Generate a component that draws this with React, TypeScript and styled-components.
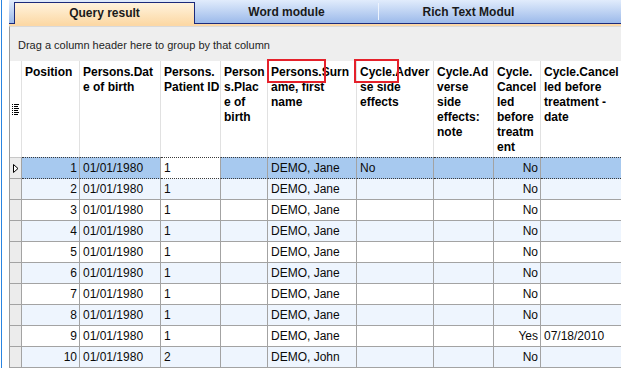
import React from 'react';
import styled, { createGlobalStyle } from 'styled-components';

const GlobalStyle = createGlobalStyle`
  html, body {
    margin: 0;
    padding: 0;
    background: #ffffff;
  }
  body {
    font-family: "Liberation Sans", Arial, sans-serif;
    font-size: 12px;
    color: #000;
  }
`;

const COLS = [12, 58, 81, 60, 47, 89, 77, 60, 47, 120];
const TEMPLATE = COLS.map((w) => `${w}px`).join(' ');

const Window = styled.div`
  display: flex;
  width: 621px;
  height: 368px;
  overflow: hidden;
`;

const Gutter = styled.div`
  width: 9px;
  flex-shrink: 0;
  display: flex;
  background: #ffffff;
`;

const GutterLine = styled.div`
  width: 1px;
  margin-left: 1px;
  background: #2a84e0;
`;

const Main = styled.div`
  flex: 1;
  display: flex;
  flex-direction: column;
  min-width: 0;
`;

const TabStrip = styled.div`
  height: 23px;
  display: flex;
  align-items: flex-end;
  border-bottom: 1px solid #1b2a7a;
  background: linear-gradient(#e1ecfc, #9cbaea);
`;

const Tab = styled.div<{ $active?: boolean; $width: number; $sep?: boolean }>`
  position: relative;
  width: ${(p) => p.$width}px;
  height: 23px;
  box-sizing: border-box;
  display: flex;
  align-items: center;
  justify-content: center;
  flex-shrink: 0;
  font-weight: bold;
  font-size: 12px;
  color: #1a1a1a;
  margin-left: ${(p) => (p.$active ? '5px' : '0')};
  ${(p) =>
    p.$active &&
    `
    border: 1px solid #1b2a7a;
    border-bottom: none;
    margin-bottom: -1px;
    height: 22px;
    padding-bottom: 1px;
    background: linear-gradient(#fff3dd, #fcd9a6);
  `}
  ${(p) =>
    p.$sep &&
    `
    &::before {
      content: '';
      position: absolute;
      left: 0;
      top: 3px;
      bottom: 3px;
      width: 1px;
      background: #eef4fe;
    }
  `}
`;

const PeachBand = styled.div`
  height: 2px;
  background: #fcd8a6;
`;

const Panel = styled.div`
  flex: 1;
  display: flex;
  flex-direction: column;
  background: #eeeeee;
  border-left: 1px solid #9c9c9c;
  border-top: 1px solid #d9d9d9;
  min-height: 0;
`;

const GroupArea = styled.div`
  height: 35px;
  display: flex;
  align-items: center;
  padding-left: 8px;
  padding-top: 1px;
  box-sizing: border-box;
  font-size: 11px;
  color: #1e1e1e;
`;

const Grid = styled.div`
  position: relative;
  flex: 1;
  background: #ffffff;
`;

const HeaderRow = styled.div`
  display: grid;
  grid-template-columns: ${TEMPLATE};
  height: 96px;
  background: #ffffff;
`;

const HeaderCell = styled.div`
  border-right: 1px solid #e1e1e1;
  padding: 4px 0 0 3px;
  font-weight: bold;
  font-size: 12px;
  line-height: 15px;
  white-space: nowrap;
  overflow: hidden;
  position: relative;
`;

const ChooserIcon = styled.svg`
  position: absolute;
  left: 2px;
  top: 43px;
`;

const Row = styled.div`
  display: grid;
  grid-template-columns: ${TEMPLATE};
`;

const Cell = styled.div<{
  $align?: 'left' | 'right';
  $bg: string;
  $selected?: boolean;
}>`
  height: 20px;
  line-height: 20px;
  padding: 0 2px 0 3px;
  text-align: ${(p) => p.$align ?? 'left'};
  background: ${(p) => p.$bg};
  border-right: 1px solid #a3a3a3;
  border-bottom: ${(p) => (p.$selected ? '1px dotted #3a3a3a' : '1px solid #a3a3a3')};
  border-top: ${(p) => (p.$selected ? '1px dotted #3a3a3a' : 'none')};
  white-space: nowrap;
  overflow: hidden;
  font-size: 12px;
  color: #0a0a0a;
`;

const Indicator = styled.div<{ $first?: boolean }>`
  height: 20px;
  background: #ececec;
  border-right: 1px solid #a3a3a3;
  border-bottom: 1px solid #a3a3a3;
  border-top: ${(p) => (p.$first ? '1px solid #c8c8c8' : 'none')};
  display: flex;
  align-items: center;
  padding-left: 3px;
`;

const Annotation = styled.div<{ $left: number; $width: number }>`
  position: absolute;
  top: -2px;
  left: ${(p) => p.$left}px;
  width: ${(p) => p.$width}px;
  height: 24px;
  box-sizing: border-box;
  border: 2px solid #e5212b;
  pointer-events: none;
`;

const HEADERS: string[][] = [
  [],
  ['Position'],
  ['Persons.Dat', 'e of birth'],
  ['Persons.', 'Patient ID'],
  ['Person', 's.Plac', 'e of', 'birth'],
  ['Persons.Surn', 'ame, first', 'name'],
  ['Cycle.Adver', 'se side', 'effects'],
  ['Cycle.Ad', 'verse', 'side', 'effects:', 'note'],
  ['Cycle.', 'Cancel', 'led', 'before', 'treatm', 'ent'],
  ['Cycle.Cancel', 'led before', 'treatment -', 'date'],
];

type DataRow = {
  pos: number;
  dob: string;
  pid: string;
  place: string;
  name: string;
  adverse: string;
  note: string;
  canceled: string;
  date: string;
};

const ROWS: DataRow[] = Array.from({ length: 10 }, (_, i) => ({
  pos: i + 1,
  dob: '01/01/1980',
  pid: i === 9 ? '2' : '1',
  place: '',
  name: i === 9 ? 'DEMO, John' : 'DEMO, Jane',
  adverse: i === 0 ? 'No' : '',
  note: '',
  canceled: i === 8 ? 'Yes' : 'No',
  date: i === 8 ? '07/18/2010' : '',
}));

const SELECTED = '#a7c9ef';
const ALT = '#eef5fe';

const App: React.FC = function () {
  return (
    <>
      <GlobalStyle />
      <Window>
        <Gutter>
          <GutterLine />
        </Gutter>
        <Main>
          <TabStrip>
            <Tab $active $width={181}>
              Query result
            </Tab>
            <Tab $width={183}>Word module</Tab>
            <Tab $width={181} $sep>
              Rich Text Modul
            </Tab>
          </TabStrip>
          <PeachBand />
          <Panel>
            <GroupArea>Drag a column header here to group by that column</GroupArea>
            <Grid>
              <HeaderRow>
                {HEADERS.map((lines, i) => (
                  <HeaderCell key={i}>
                    {i === 0 ? (
                      <ChooserIcon width="7" height="11" viewBox="0 0 7 11">
                        {[0, 2, 4, 6, 8, 10].map((y) => (
                          <g key={y}>
                            <rect x="0" y={y} width="1" height="1" fill="#000" />
                            <rect x="2" y={y} width={y % 4 === 0 ? 5 : 4} height="1" fill="#000" />
                          </g>
                        ))}
                      </ChooserIcon>
                    ) : (
                      lines.map((l, j) => <div key={j}>{l}</div>)
                    )}
                  </HeaderCell>
                ))}
              </HeaderRow>
              {ROWS.map((r, i) => {
                const sel = i === 0;
                const bg = sel ? SELECTED : i % 2 === 1 ? ALT : '#ffffff';
                return (
                  <Row key={r.pos}>
                    <Indicator $first={sel}>
                      {sel && (
                        <svg width="6" height="9" viewBox="0 0 6 9">
                          <polygon
                            points="0.5,0.5 5,4.5 0.5,8.5"
                            fill="#ffffff"
                            stroke="#000"
                            strokeWidth="1"
                          />
                        </svg>
                      )}
                    </Indicator>
                    <Cell $bg={bg} $selected={sel} $align="right">
                      {r.pos}
                    </Cell>
                    <Cell $bg={bg} $selected={sel}>
                      {r.dob}
                    </Cell>
                    <Cell $bg={sel ? '#ffffff' : bg} $selected={sel}>
                      {r.pid}
                    </Cell>
                    <Cell $bg={bg} $selected={sel}>
                      {r.place}
                    </Cell>
                    <Cell $bg={bg} $selected={sel}>
                      {r.name}
                    </Cell>
                    <Cell $bg={bg} $selected={sel}>
                      {r.adverse}
                    </Cell>
                    <Cell $bg={bg} $selected={sel}>
                      {r.note}
                    </Cell>
                    <Cell $bg={bg} $selected={sel} $align="right">
                      {r.canceled}
                    </Cell>
                    <Cell $bg={bg} $selected={sel}>
                      {r.date}
                    </Cell>
                  </Row>
                );
              })}
              <Annotation $left={257} $width={59} />
              <Annotation $left={344} $width={45} />
            </Grid>
          </Panel>
        </Main>
      </Window>
    </>
  );
};

export default App;
